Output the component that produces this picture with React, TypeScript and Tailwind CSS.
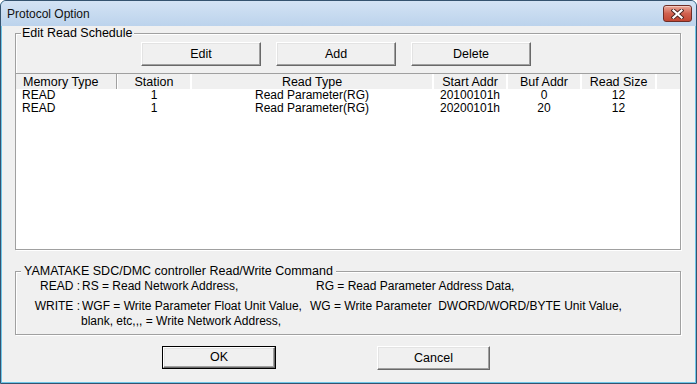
import React from "react";

const columns = [
  { title: "Memory Type", head: "w-[101px] justify-start pl-[7px]", cell: "w-[101px] text-left pl-[6px]" },
  { title: "Station", head: "w-[74px] justify-center border-l border-white", cell: "w-[74px] text-center" },
  { title: "Read Type", head: "w-[242px] justify-center border-l border-white", cell: "w-[242px] text-center" },
  { title: "Start Addr", head: "w-[74px] justify-center border-l border-white", cell: "w-[74px] text-center" },
  { title: "Buf Addr", head: "w-[74px] justify-center border-l border-white", cell: "w-[74px] text-center" },
  { title: "Read Size", head: "w-[75px] justify-center border-l border-white", cell: "w-[75px] text-center" },
];

const rows = [
  ["READ", "1", "Read Parameter(RG)", "20100101h", "0", "12"],
  ["READ", "1", "Read Parameter(RG)", "20200101h", "20", "12"],
];

function Button({ label, width, isDefault }: { label: string; width: string; isDefault?: boolean }) {
  const face = (
    <div
      className={`flex h-full w-full items-center justify-center bg-[#f0f0f0] border border-t-white border-l-white border-r-[#696969] border-b-[#696969] shadow-[inset_-1px_-1px_0_#a0a0a0,inset_1px_1px_0_#e3e3e3]`}
    >
      {label}
    </div>
  );
  if (isDefault) {
    return <div className={`h-[23px] ${width} border border-black`}>{face}</div>;
  }
  return <div className={`h-[24px] ${width}`}>{face}</div>;
}

function GroupBox({
  label,
  className,
  labelClass,
  children,
}: {
  label: string;
  className: string;
  labelClass: string;
  children: React.ReactNode;
}) {
  return (
    <div className={`relative border border-[#a0a0a0] shadow-[inset_1px_1px_0_#fff,1px_1px_0_#fff] ${className}`}>
      <span className={`absolute -top-[8px] bg-[#f0f0f0] leading-[15px] whitespace-nowrap ${labelClass}`}>{label}</span>
      {children}
    </div>
  );
}

export default function App() {
  return (
    <div className="w-[697px] h-[384px] bg-white font-['Liberation_Sans',Arial,sans-serif] text-black text-[12.5px]">
      <div className="flex h-full w-full flex-col overflow-hidden rounded-t-[6px] border border-[#34536f] bg-[#6fc6e8]">
        {/* Title bar */}
        <div className="flex h-[25px] shrink-0 items-center bg-gradient-to-b from-[#d3e3f4] to-[#bcd3ec]">
          <span className="pl-[6px] text-[12px] text-[#111]">Protocol Option</span>
          <div className="ml-auto mr-[4px] flex h-[17px] w-[29px] items-center justify-center rounded-[3px] border border-[#6e2d26] bg-gradient-to-b from-[#e9a99b] via-[#d0614f] to-[#c24632] shadow-[inset_0_1px_0_#f4c9bf]">
            <svg width="13" height="10" viewBox="0 0 13 10">
              <path d="M2.5 1.5 L10.5 8.5 M10.5 1.5 L2.5 8.5" stroke="#4b2420" strokeWidth="4" strokeLinecap="square" />
              <path d="M2.5 1.5 L10.5 8.5 M10.5 1.5 L2.5 8.5" stroke="#ffffff" strokeWidth="2.2" strokeLinecap="square" />
            </svg>
          </div>
        </div>

        {/* Client area */}
        <div className="mx-[1px] mb-[1px] flex flex-1 flex-col bg-[#f0f0f0]">
          <GroupBox label="Edit Read Schedule" className="ml-[13px] mt-[7px] h-[217px] w-[666px] flex flex-col" labelClass="left-[5px] px-[1px]">
            <div className="ml-[125px] mt-[8px] flex gap-[15px]">
              <Button label="Edit" width="w-[120px]" />
              <Button label="Add" width="w-[120px]" />
              <Button label="Delete" width="w-[120px]" />
            </div>
            <div className="mt-[7px] flex flex-1 flex-col border-t border-[#a0a0a0] bg-white">
              <div className="flex h-[15px] bg-[#f0f0f0] leading-[14px]">
                {columns.map((c) => (
                  <div key={c.title} className={`flex h-full items-center border-r border-[#a0a0a0] whitespace-nowrap ${c.head}`}>
                    {c.title}
                  </div>
                ))}
                <div className="flex-1 border-l border-white" />
              </div>
              {rows.map((r, i) => (
                <div key={i} className="flex h-[13px] text-[12px] leading-[13px]">
                  {r.map((v, j) => (
                    <div key={j} className={`whitespace-nowrap ${columns[j].cell}`}>
                      {v}
                    </div>
                  ))}
                </div>
              ))}
            </div>
          </GroupBox>

          <GroupBox
            label="YAMATAKE SDC/DMC controller Read/Write Command"
            className="ml-[13px] mt-[21px] h-[64px] w-[666px] flex flex-col"
            labelClass="left-[5px] px-[3px]"
          >
            <div className="mt-[6px] flex h-[17px] items-center whitespace-nowrap text-[12px] leading-[17px]">
              <span className="w-[64px] shrink-0 text-right">READ :</span>
              <span className="ml-[2px] w-[234px] shrink-0">RS = Read Network Address,</span>
              <span>RG = Read Parameter Address Data,</span>
            </div>
            <div className="mt-[3px] flex h-[17px] items-center whitespace-pre text-[12px] leading-[17px]">
              <span className="w-[64px] shrink-0 text-right">WRITE :</span>
              <span className="ml-[2px] w-[228px] shrink-0 overflow-hidden">WGF = Write Parameter Float Unit Value,</span>
              <span>WG = Write Parameter  DWORD/WORD/BYTE Unit Value,</span>
            </div>
            <div className="-mt-[2px] flex h-[17px] items-center whitespace-nowrap text-[12px] leading-[17px]">
              <span className="ml-[65px]">blank, etc,,, = Write Network Address,</span>
            </div>
          </GroupBox>

          <div className="ml-[160px] mt-[11px] flex gap-[101px]">
            <Button label="OK" width="w-[114px]" isDefault />
            <Button label="Cancel" width="w-[113px]" />
          </div>
        </div>
      </div>
    </div>
  );
}
